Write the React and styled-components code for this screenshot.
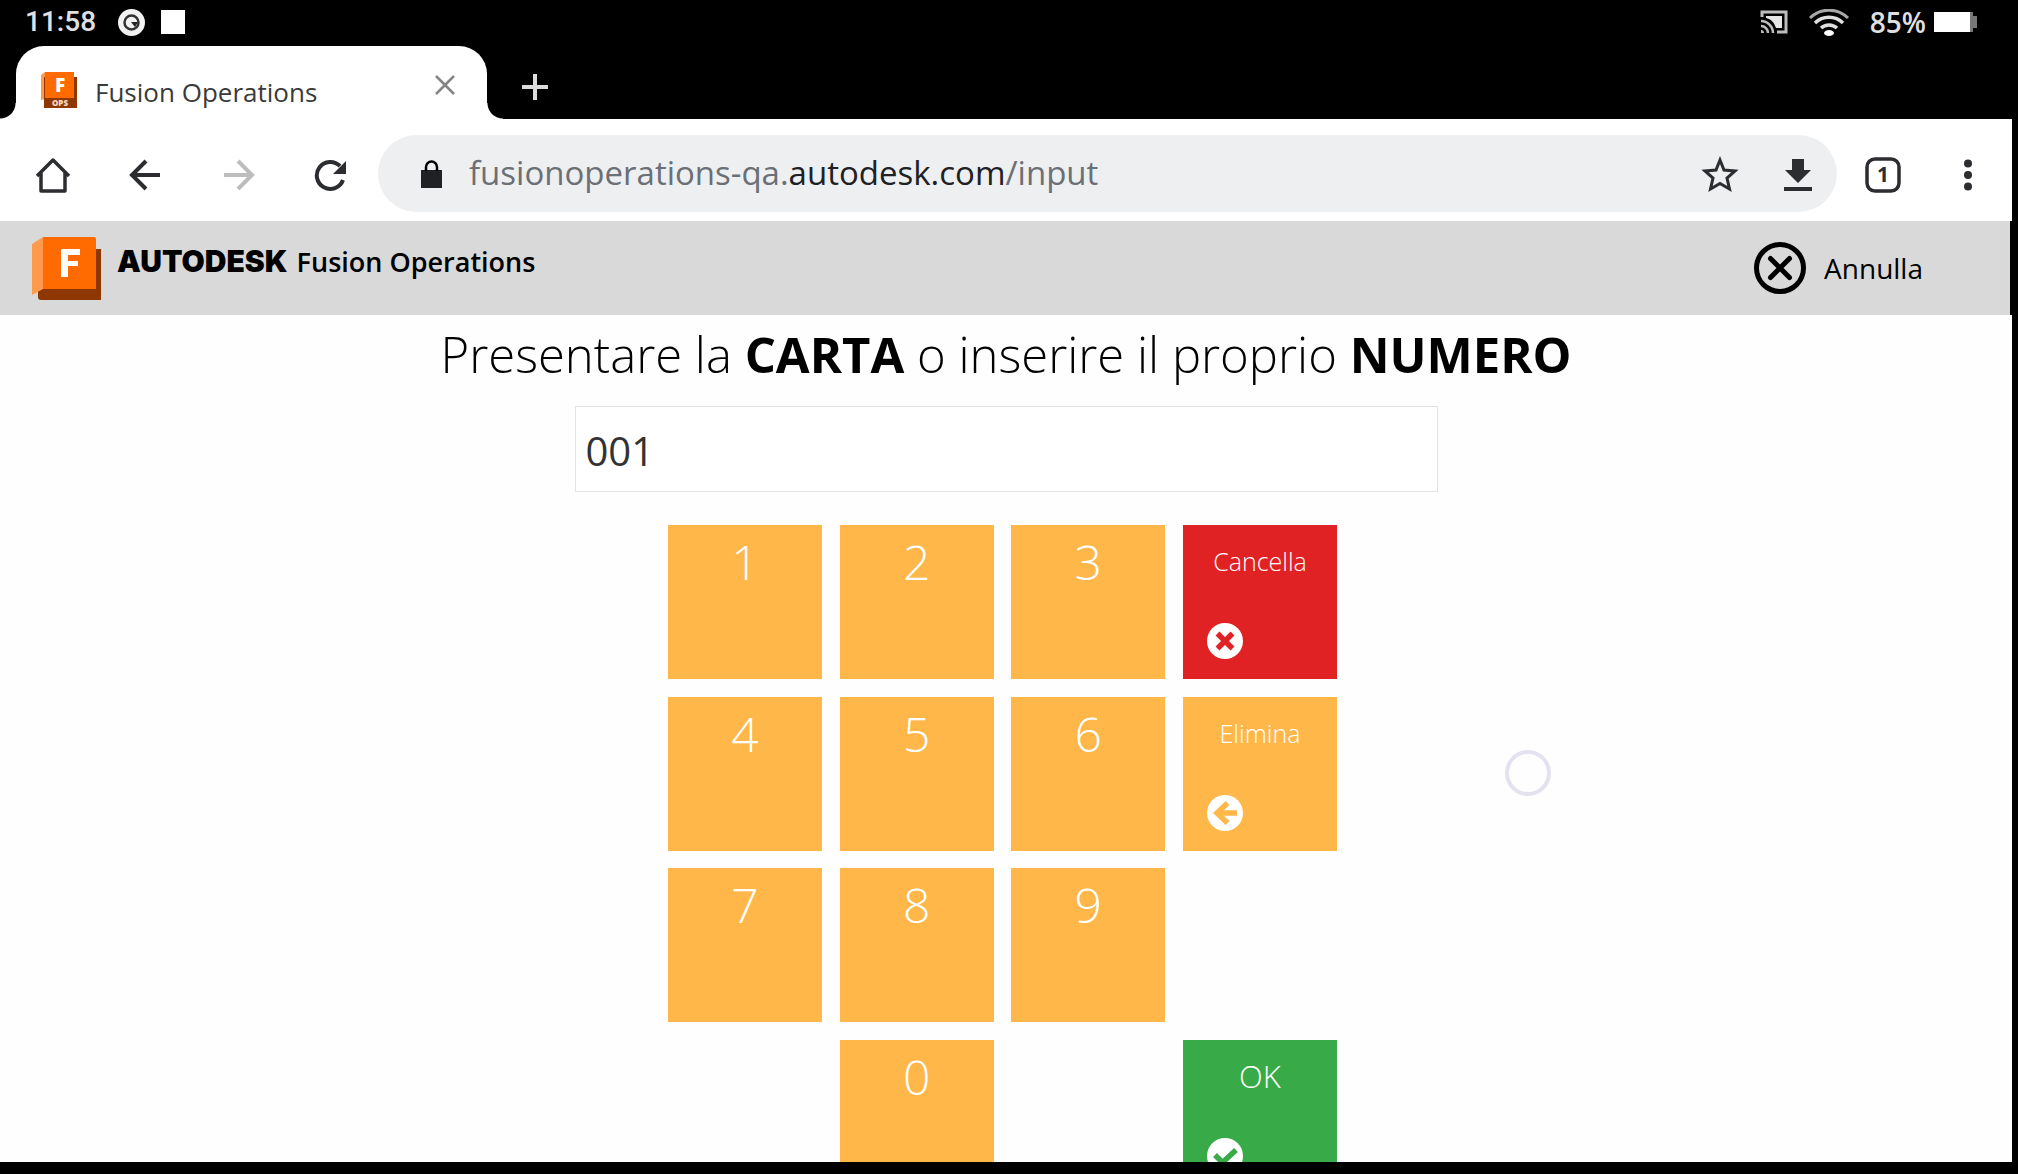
import React, { useState } from "react";
import styled, { createGlobalStyle } from "styled-components";

const GlobalStyle = createGlobalStyle`
  *, *::before, *::after { box-sizing: border-box; }
  body { margin: 0; background: #000; font-family: "Open Sans", "Noto Sans", sans-serif; }
  button, input { font: inherit; margin: 0; }
  svg { display: block; flex: none; }
`;

const Device = styled.div`
  position: relative;
  display: flex;
  flex-direction: column;
  height: 100vh;
  padding: 0 6px 12px 0;
  background: #000;
  overflow: hidden;
`;

const StatusBar = styled.header`
  display: flex;
  justify-content: space-between;
  align-items: center;
  height: 46px;
  padding: 0 35px 2px 25px;
  color: #e0e0e0;
`;

const StatusGroup = styled.div`
  display: flex;
  align-items: center;
  gap: ${(p) => p.$gap}px;
`;

const Clock = styled.time`
  margin-right: 6px;
  font: 500 28px/32px Roboto, sans-serif;
`;

const Charge = styled.div`
  display: flex;
  align-items: center;
  gap: 8px;
  font-size: 28px;
  font-weight: 600;
  line-height: 32px;
`;

const TabStrip = styled.div`
  display: flex;
  align-items: flex-end;
  height: 73px;
`;

const Tab = styled.div`
  position: relative;
  display: flex;
  align-items: center;
  width: 471px;
  height: 73px;
  margin-left: 16px;
  padding: 14px 27px 0 25px;
  border-radius: 28px 28px 0 0;
  background: #fff;

  &::before, &::after {
    content: "";
    position: absolute;
    bottom: 0;
    width: 16px;
    height: 16px;
  }
  &::before {
    right: 100%;
    background: radial-gradient(circle at 0 0, #000 15px, #fff 16px);
  }
  &::after {
    left: 100%;
    background: radial-gradient(circle at 100% 0, #000 15px, #fff 16px);
  }
`;

const TabTitle = styled.span`
  flex: 1;
  margin-left: 18px;
  padding-top: 4px;
  font-size: 26px;
  line-height: 36px;
  color: #3a3a3a;
`;

const IconButton = styled.button`
  display: flex;
  align-items: center;
  justify-content: center;
  width: ${(p) => p.$size || 36}px;
  height: ${(p) => p.$size || 36}px;
  padding: 2px 0 0;
  border: 0;
  background: none;
  color: ${(p) => p.$tone || "#2c2d30"};
  cursor: pointer;
`;

const NewTab = styled(IconButton)`
  margin: 0 0 15px 30px;
`;

const CloseTab = styled(IconButton)`
  margin-bottom: 12px;
`;

const Toolbar = styled.nav`
  display: flex;
  align-items: center;
  height: 102px;
  padding: 7px 26px 0 35px;
  background: #fff;
`;

const NavButtons = styled.div`
  display: flex;
  gap: 57px;
  margin-right: 28px;
`;

const Omnibox = styled.div`
  flex: 1;
  display: flex;
  align-items: center;
  height: 77px;
  padding: 0 20px 0 36px;
  border-radius: 39px;
  background: #eeeff1;
`;

const Url = styled.a`
  flex: 1;
  margin-left: 19px;
  padding-bottom: 2px;
  font-size: 33px;
  line-height: 44px;
  color: #6b6f76;
  text-decoration: none;
  white-space: nowrap;
`;

const Host = styled.span`
  color: #202124;
`;

const OmniActions = styled.div`
  display: flex;
  gap: 40px;
`;

const MenuButtons = styled.div`
  display: flex;
  gap: 49px;
  margin-left: 28px;
`;

const AppBar = styled.div`
  display: flex;
  align-items: center;
  justify-content: space-between;
  height: 94px;
  margin-right: 2px;
  padding: 0 87px 0 32px;
  background: #d9d9d9;
`;

const Brand = styled.a`
  display: flex;
  align-items: center;
  gap: 16px;
  color: #000;
  text-decoration: none;
`;

const BrandName = styled.span`
  display: flex;
  align-items: baseline;
  gap: 9px;
  padding-bottom: 14px;
  font-size: 27px;
  font-weight: 600;
  line-height: 38px;
`;

const Company = styled.strong`
  font-family: Inter, sans-serif;
  font-size: 30px;
  font-weight: 900;
`;

const Cancel = styled.button`
  display: flex;
  align-items: center;
  gap: 18px;
  padding: 0;
  border: 0;
  background: none;
  color: #000;
  font-size: 28px;
  line-height: 38px;
  cursor: pointer;
`;

const Main = styled.main`
  flex: 1;
  min-height: 0;
  display: flex;
  flex-direction: column;
  align-items: center;
  background: #fefefe;
  overflow: hidden;
`;

const Prompt = styled.label`
  margin-top: 6px;
  font-size: 49px;
  font-weight: 300;
  line-height: 66px;
  color: #000;
  white-space: nowrap;
`;

const Strong = styled.strong`
  font-weight: 700;
`;

const CodeInput = styled.input`
  width: 43%;
  max-width: 863px;
  height: 86px;
  margin-top: 19px;
  padding: 2px 10px 0;
  border: 1px solid #e3e3e3;
  border-radius: 0;
  background: #fff;
  color: #333;
  font-size: 40px;
  flex: none;
  outline: none;
`;

const Keypad = styled.div`
  display: grid;
  grid-template-columns: repeat(4, 154px);
  grid-template-rows: repeat(4, 154px);
  justify-content: space-between;
  align-content: space-between;
  flex: none;
  width: 669px;
  height: 669px;
  margin: 33px 7px 0 0;
`;

const keyColors = { digit: "#ffb74a", clear: "#e12224", ok: "#39aa48" };

const Key = styled.button`
  display: flex;
  flex-direction: column;
  align-items: center;
  justify-content: space-between;
  grid-column: ${(p) => p.$col};
  padding: ${(p) => (p.$size ? 18 : 4)}px 24px 20px;
  border: 0;
  background: ${(p) => keyColors[p.$kind || "digit"]};
  color: #fff;
  font-size: ${(p) => p.$size || 48}px;
  font-weight: 300;
  line-height: ${(p) => (p.$size ? 36 : 66)}px;
  cursor: pointer;

  svg { align-self: flex-start; }
`;

const TouchPoint = styled.div`
  position: absolute;
  left: 1505px;
  top: 750px;
  width: 46px;
  height: 46px;
  border: 4px solid #e4e2ee;
  border-radius: 50%;
  pointer-events: none;
`;

const Glyph = ({ w, h = w, children, ...rest }) => (
  <svg width={w} height={h} viewBox={`0 0 ${w} ${h}`} fill="none" stroke="currentColor" aria-hidden="true" {...rest}>
    {children}
  </svg>
);

const Disc = ({ color, children }) => (
  <Glyph w={36} stroke={color} strokeWidth="5.5" strokeLinecap="butt">
    <circle cx="18" cy="18" r="18" fill="#fff" stroke="none" />
    {children}
  </Glyph>
);

const rows = [
  ["1", "2", "3"],
  ["4", "5", "6"],
  ["7", "8", "9"],
];

export default function App() {
  const [code, setCode] = useState("001");
  const add = (d) => setCode((c) => c + d);

  const actions = [
    <Key key="clear" $col={4} $kind="clear" $size={25} onClick={() => setCode("")}>
      Cancella
      <Disc color={keyColors.clear}>
        <path d="M10.500 10.500 25.500 25.500M25.500 10.500 10.500 25.500" />
      </Disc>
    </Key>,
    <Key key="del" $col={4} $size={25} onClick={() => setCode((c) => c.slice(0, -1))}>
      Elimina
      <Disc color={keyColors.digit}>
        <path d="M20.500 8 10 18 20.500 28" />
        <path d="M10 18H30" />
      </Disc>
    </Key>,
    null,
  ];

  return (
    <>
      <GlobalStyle />
      <Device>
        <StatusBar>
          <StatusGroup $gap={16}>
            <Clock>11:58</Clock>
            <Glyph w={27} strokeWidth="4">
              <circle cx="13.5" cy="13.5" r="13.5" fill="#f2f2f2" stroke="none" />
              <circle cx="13.5" cy="13.5" r="7" stroke="#333" strokeWidth="2.5" />
              <path d="M13 13h7l-3 5z" fill="#222" stroke="none" />
            </Glyph>
            <Glyph w={24}>
              <path d="M0 0H24V24H0z" fill="#fff" stroke="none" />
            </Glyph>
          </StatusGroup>
          <StatusGroup $gap={20}>
            <Glyph w={28} h={24} stroke="#bdbdbd" strokeWidth="3">
              <path d="M2 7V2H26V22H17" />
              <path d="M6 6H22V18H16C14 12 11 9 6 8z" fill="#e6e6e6" stroke="none" />
              <path d="M1 11A12 12 0 0 1 13 23M1 16A7 7 0 0 1 8 23" strokeWidth="2.5" />
              <path d="M1 20A3 3 0 0 1 4 23H1z" fill="#bdbdbd" stroke="none" />
            </Glyph>
            <Glyph w={42} h={27} strokeWidth="3.5">
              <path d="M2 9A27 27 0 0 1 40 9" stroke="#a8a8a8" strokeWidth="3" />
              <path d="M7 14A20 20 0 0 1 35 14" />
              <path d="M13 19A12 12 0 0 1 29 19" />
              <ellipse cx="21" cy="24" rx="5" ry="3" fill="#fff" stroke="none" />
            </Glyph>
            <Charge>
              85%
              <Glyph w={43} h={20} stroke="none">
                <path d="M0 0H36V20H0z" fill="#fff" />
                <path d="M36 0h3v4h4v12h-4v4h-3z" fill="#777" />
              </Glyph>
            </Charge>
          </StatusGroup>
        </StatusBar>

        <TabStrip>
          <Tab>
            <Glyph w={36} stroke="none">
              <path d="M0 3 4 0V27L0 28z" fill="#ff9a4d" />
              <path d="M3 5H36V36H3z" fill="#8f3700" />
              <path d="M4 0H33V26H4z" fill="#ff6b00" />
              <text x="19" y="20" textAnchor="middle" fill="#fff" fontFamily="Open Sans, sans-serif" fontSize="19" fontWeight="800">F</text>
              <text x="19" y="34" textAnchor="middle" fill="#f3d9c8" fontFamily="Open Sans, sans-serif" fontSize="8" fontWeight="800">OPS</text>
            </Glyph>
            <TabTitle>Fusion Operations</TabTitle>
            <CloseTab $size={30} $tone="#858585" aria-label="Close tab">
              <Glyph w={20} strokeWidth="2.5">
                <path d="M1 1 19 19M19 1 1 19" />
              </Glyph>
            </CloseTab>
          </Tab>
          <NewTab $tone="#dcdcdc" aria-label="New tab">
            <Glyph w={28} strokeWidth="4">
              <path d="M14 1V27M1 14H27" />
            </Glyph>
          </NewTab>
        </TabStrip>

        <Toolbar>
          <NavButtons>
            <IconButton aria-label="Home">
              <Glyph w={36} strokeWidth="3.5" strokeLinejoin="round">
                <path d="M2 19 18 3 34 19M6 16V34H30V16" />
              </Glyph>
            </IconButton>
            <IconButton aria-label="Back">
              <Glyph w={36} strokeWidth="4">
                <path d="M32 18H4M18 4 4 18 18 32" />
              </Glyph>
            </IconButton>
            <IconButton $tone="#bdbdbd" aria-label="Forward">
              <Glyph w={36} strokeWidth="4">
                <path d="M3 18H31M17 4 31 18 17 32" />
              </Glyph>
            </IconButton>
            <IconButton aria-label="Reload">
              <Glyph w={36} strokeWidth="4">
                <path d="M29 23A13.5 13.5 0 1 1 26 9" />
                <path d="M32 4V17H19z" fill="currentColor" stroke="none" />
              </Glyph>
            </IconButton>
          </NavButtons>
          <Omnibox>
            <Glyph w={36} strokeWidth="2.5">
              <path d="M7 14H28V32H7z" fill="#202124" stroke="none" />
              <path d="M12 15V11A5.5 5.5 0 0 1 23 11V15" />
            </Glyph>
            <Url href="#input">
              fusionoperations-qa.<Host>autodesk.com</Host>/input
            </Url>
            <OmniActions>
              <IconButton $size={38} aria-label="Bookmark">
                <Glyph w={38} strokeWidth="3">
                  <path d="M19 4 23 14 34 15 26 22 28.500 33 19 27.500 9.500 33 12 22 4 15 15 14z" />
                </Glyph>
              </IconButton>
              <IconButton $size={38} aria-label="Download">
                <Glyph w={38} stroke="none" fill="currentColor">
                  <path d="M13 3H25V14H32L19 27 6 14H13zM5 31H33V35H5z" />
                </Glyph>
              </IconButton>
            </OmniActions>
          </Omnibox>
          <MenuButtons>
            <IconButton aria-label="Tabs">
              <Glyph w={36} strokeWidth="3.5">
                <rect x="2" y="2" width="32" height="32" rx="8" />
                <text x="18" y="25" textAnchor="middle" fill="currentColor" stroke="none" fontFamily="Open Sans, sans-serif" fontSize="21" fontWeight="700">1</text>
              </Glyph>
            </IconButton>
            <IconButton aria-label="Menu">
              <Glyph w={36} fill="currentColor" stroke="none">
                <circle cx="18" cy="6.500" r="4" />
                <circle cx="18" cy="18" r="4" />
                <circle cx="18" cy="29.500" r="4" />
              </Glyph>
            </IconButton>
          </MenuButtons>
        </Toolbar>

        <AppBar>
          <Brand href="#home">
            <Glyph w={69} h={63} stroke="none">
              <path d="M6 52H58V12H69V63H9Q6 63 6 60z" fill="#8f3700" />
              <path d="M0 7 11 0V52L0 58z" fill="#ff9a4d" />
              <path d="M11 0H62Q64 0 64 2V52H11z" fill="#ff6b00" />
              <path d="M29 12H48V18H36V24H46V29H36V40H29z" fill="#fff" />
            </Glyph>
            <BrandName>
              <Company>AUTODESK</Company>
              <span>Fusion Operations</span>
            </BrandName>
          </Brand>
          <Cancel>
            <Glyph w={52} strokeWidth="5" strokeLinecap="round">
              <circle cx="26" cy="26" r="23.500" />
              <path d="M16.500 16.500 35.500 35.500M35.500 16.500 16.500 35.500" />
            </Glyph>
            Annulla
          </Cancel>
        </AppBar>

        <Main>
          <Prompt htmlFor="code">
            Presentare la <Strong>CARTA</Strong> o inserire il proprio <Strong>NUMERO</Strong>
          </Prompt>
          <CodeInput id="code" value={code} onChange={(e) => setCode(e.target.value)} />
          <Keypad>
            {rows.map((row, r) => (
              <React.Fragment key={r}>
                {row.map((d, c) => (
                  <Key key={d} $col={c + 1} onClick={() => add(d)}>{d}</Key>
                ))}
                {actions[r]}
              </React.Fragment>
            ))}
            <Key $col={2} onClick={() => add("0")}>0</Key>
            <Key $col={4} $kind="ok" $size={31}>
              OK
              <Disc color={keyColors.ok}>
                <path d="M8 17 15.500 24.500 29 12" />
              </Disc>
            </Key>
          </Keypad>
        </Main>
        <TouchPoint />
      </Device>
    </>
  );
}
